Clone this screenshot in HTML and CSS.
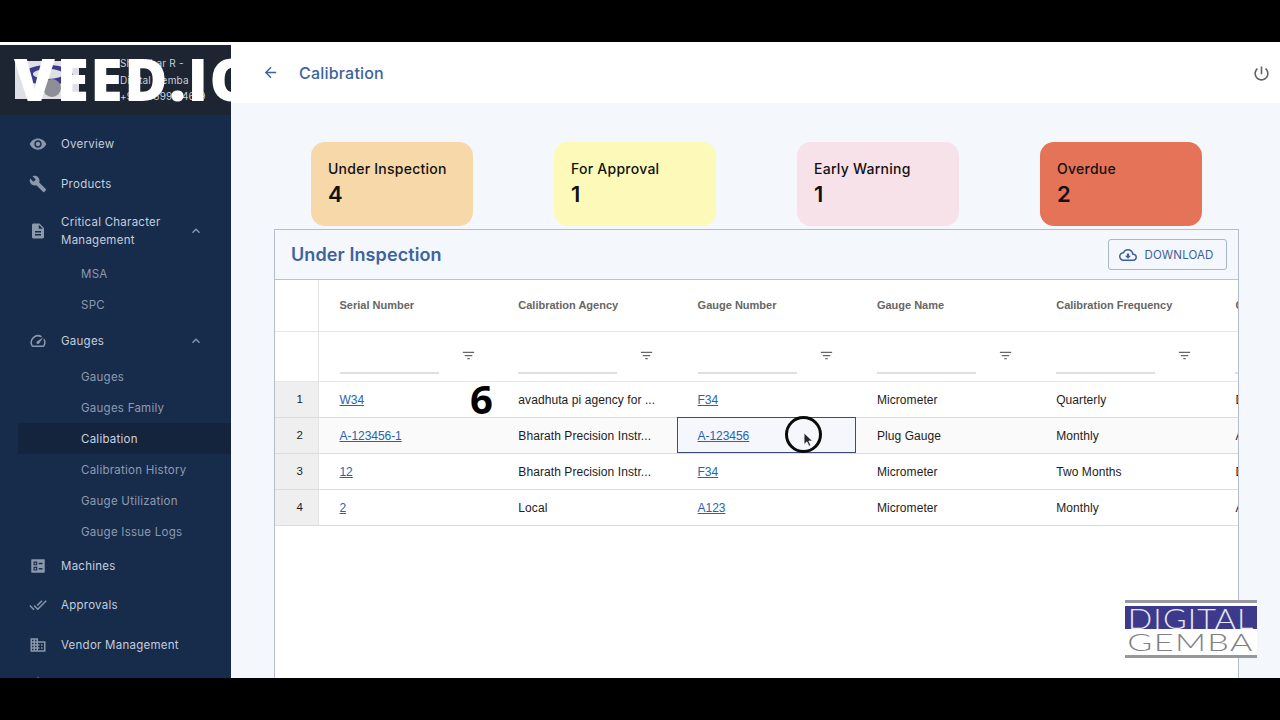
FILE: index.html
```html
<!DOCTYPE html>
<html lang="en">
<head>
    <meta charset="UTF-8">
    <meta name="viewport" content="width=device-width, initial-scale=1.0">
    <title>Calibration</title>
    <link rel="stylesheet" href="styles.css">
</head>
<body>
    <div class="bar-top"></div>

    <div class="app">
        <aside class="sidebar">
            <div class="brand">
                <svg class="brand-logo" viewBox="0 0 64 38" width="64" height="38">
                    <rect width="64" height="38" fill="#dfe0e6"/>
                    <ellipse cx="33" cy="14" rx="25" ry="10" fill="#3d3a8c"/>
                    <ellipse cx="33" cy="13" rx="15" ry="5" fill="#dfe0e6"/>
                    <circle cx="37" cy="27" r="9" fill="#8d8f96"/>
                </svg>
                <div class="brand-text">
                    <div>Shankhar R -</div>
                    <div>Digital Gemba</div>
                    <div>+91 99899 94619</div>
                </div>
            </div>

            <nav class="nav">
                <a class="nav-item">
                    <svg class="nav-icon" viewBox="0 0 24 24"><path d="M12 4.5C7 4.5 2.73 7.61 1 12c1.73 4.39 6 7.5 11 7.5s9.27-3.11 11-7.5c-1.73-4.39-6-7.5-11-7.5zM12 17c-2.76 0-5-2.24-5-5s2.24-5 5-5 5 2.24 5 5-2.24 5-5 5zm0-8c-1.66 0-3 1.34-3 3s1.34 3 3 3 3-1.34 3-3-1.34-3-3-3z"/></svg>
                    <span>Overview</span>
                </a>
                <a class="nav-item">
                    <svg class="nav-icon" viewBox="0 0 24 24"><path d="M22.7 19l-9.1-9.1c.9-2.3.4-5-1.5-6.9-2-2-5-2.4-7.4-1.3L9 6 6 9 1.6 4.7C.4 7.1.9 10.1 2.9 12.1c1.9 1.9 4.6 2.4 6.9 1.5l9.1 9.1c.4.4 1 .4 1.4 0l2.3-2.3c.5-.4.5-1.1.1-1.4z"/></svg>
                    <span>Products</span>
                </a>
                <a class="nav-item nav-item-tall">
                    <svg class="nav-icon" viewBox="0 0 24 24"><path d="M14 2H6c-1.1 0-1.99.9-1.99 2L4 20c0 1.1.89 2 1.99 2H18c1.1 0 2-.9 2-2V8l-6-6zm2 16H8v-2h8v2zm0-4H8v-2h8v2zm-3-5V3.5L18.5 9H13z"/></svg>
                    <span>Critical Character<br>Management</span>
                    <svg class="nav-caret" viewBox="0 0 24 24"><path d="M12 8l-6 6 1.41 1.41L12 10.83l4.59 4.58L18 14z"/></svg>
                </a>
                <a class="nav-sub">MSA</a>
                <a class="nav-sub">SPC</a>
                <a class="nav-item nav-gauges">
                    <svg class="nav-icon" viewBox="0 0 24 24"><path d="M20.38 8.57l-1.23 1.85a8 8 0 0 1-.22 7.58H5.07A8 8 0 0 1 15.58 6.85l1.85-1.23A10 10 0 0 0 3.35 19a2 2 0 0 0 1.72 1h13.85a2 2 0 0 0 1.74-1 10 10 0 0 0-.27-10.44zm-9.79 6.84a2 2 0 0 0 2.83 0l5.66-8.49-8.49 5.66a2 2 0 0 0 0 2.83z"/></svg>
                    <span>Gauges</span>
                    <svg class="nav-caret" viewBox="0 0 24 24"><path d="M12 8l-6 6 1.41 1.41L12 10.83l4.59 4.58L18 14z"/></svg>
                </a>
                <a class="nav-sub">Gauges</a>
                <a class="nav-sub">Gauges Family</a>
                <a class="nav-sub active">Calibation</a>
                <a class="nav-sub">Calibration History</a>
                <a class="nav-sub">Gauge Utilization</a>
                <a class="nav-sub">Gauge Issue Logs</a>
                <a class="nav-item nav-machines">
                    <svg class="nav-icon" viewBox="0 0 24 24"><path fill-rule="evenodd" d="M4 3h16a1 1 0 0 1 1 1v16a1 1 0 0 1-1 1H4a1 1 0 0 1-1-1V4a1 1 0 0 1 1-1zM6 6v5h5V6zm1.500 1.500h2v2h-2zM6 13v5h5v-5zm1.500 1.500h2v2h-2zM13 7.500V9.500h5V7.500zM13 14.500v2h5v-2z"/></svg>
                    <span>Machines</span>
                </a>
                <a class="nav-item">
                    <svg class="nav-icon" viewBox="0 0 24 24"><path d="M18 7l-1.41-1.41-6.34 6.34 1.41 1.41L18 7zm4.24-1.41L11.66 16.17 7.48 12l-1.41 1.41L11.66 19l12-12-1.42-1.41zM.41 13.41L6 19l1.41-1.41L1.83 12 .41 13.41z"/></svg>
                    <span>Approvals</span>
                </a>
                <a class="nav-item">
                    <svg class="nav-icon" viewBox="0 0 24 24"><path d="M12 7V3H2v18h20V7H12zM6 19H4v-2h2v2zm0-4H4v-2h2v2zm0-4H4V9h2v2zm0-4H4V5h2v2zm4 12H8v-2h2v2zm0-4H8v-2h2v2zm0-4H8V9h2v2zm0-4H8V5h2v2zm10 12h-8v-2h2v-2h-2v-2h2v-2h-2V9h8v10zm-2-8h-2v2h2v-2zm0 4h-2v2h2v-2z"/></svg>
                    <span>Vendor Management</span>
                </a>
                <a class="nav-item">
                    <svg class="nav-icon" viewBox="0 0 24 24"><path d="M12 2l3 7h-6zM4 12h16v9H4z"/></svg>
                </a>
            </nav>
        </aside>

        <main class="main">
            <header class="topbar">
                <svg class="back-icon" viewBox="0 0 24 24"><path d="M20 11H7.830l5.590-5.590L12 4l-8 8 8 8 1.410-1.410L7.830 13H20v-2z"/></svg>
                <span class="page-title">Calibration</span>
                <svg class="power-icon" viewBox="0 0 24 24"><path d="M13 3h-2v10h2V3zm4.830 2.170l-1.420 1.420C17.990 7.860 19 9.810 19 12c0 3.870-3.130 7-7 7s-7-3.130-7-7c0-2.190 1.010-4.140 2.580-5.420L6.170 5.170C4.230 6.820 3 9.260 3 12c0 4.970 4.030 9 9 9s9-4.030 9-9c0-2.740-1.230-5.180-3.170-6.830z"/></svg>
            </header>

            <section class="cards">
                <div class="card card-orange"><div class="card-label">Under Inspection</div><div class="card-value">4</div></div>
                <div class="card card-yellow"><div class="card-label">For Approval</div><div class="card-value">1</div></div>
                <div class="card card-pink"><div class="card-label">Early Warning</div><div class="card-value">1</div></div>
                <div class="card card-red"><div class="card-label">Overdue</div><div class="card-value">2</div></div>
            </section>

            <section class="panel">
                <div class="panel-head">
                    <h2>Under Inspection</h2>
                    <button class="download">
                        <svg viewBox="0 0 24 24"><path d="M19.350 10.040C18.670 6.590 15.640 4 12 4 9.110 4 6.600 5.640 5.350 8.040 2.340 8.360 0 10.910 0 14c0 3.310 2.690 6 6 6h13c2.760 0 5-2.240 5-5 0-2.640-2.050-4.780-4.650-4.960zM19 18H6c-2.210 0-4-1.790-4-4 0-2.050 1.530-3.760 3.560-3.970l1.070-.11.500-.950C8.080 7.140 9.940 6 12 6c2.620 0 4.880 1.860 5.390 4.430l.300 1.500 1.530.110c1.560.100 2.780 1.410 2.780 2.960 0 1.650-1.350 3-3 3zm-5.550-8h-2.900v3H8l4 4 4-4h-2.550z"/></svg>
                        DOWNLOAD
                    </button>
                </div>

                <table class="grid">
                    <thead>
                        <tr class="head-row">
                            <th class="idx"></th>
                            <th>Serial Number</th>
                            <th>Calibration Agency</th>
                            <th>Gauge Number</th>
                            <th>Gauge Name</th>
                            <th>Calibration Frequency</th>
                            <th>Calibration Date</th>
                        </tr>
                        <tr class="filter-row">
                            <th class="idx"></th>
                            <th><div class="filter"><span class="filter-line"></span><svg viewBox="0 0 24 24"><path d="M10 18h4v-2h-4v2zM3 6v2h18V6H3zm3 7h12v-2H6v2z"/></svg></div></th>
                            <th><div class="filter"><span class="filter-line"></span><svg viewBox="0 0 24 24"><path d="M10 18h4v-2h-4v2zM3 6v2h18V6H3zm3 7h12v-2H6v2z"/></svg></div></th>
                            <th><div class="filter"><span class="filter-line"></span><svg viewBox="0 0 24 24"><path d="M10 18h4v-2h-4v2zM3 6v2h18V6H3zm3 7h12v-2H6v2z"/></svg></div></th>
                            <th><div class="filter"><span class="filter-line"></span><svg viewBox="0 0 24 24"><path d="M10 18h4v-2h-4v2zM3 6v2h18V6H3zm3 7h12v-2H6v2z"/></svg></div></th>
                            <th><div class="filter"><span class="filter-line"></span><svg viewBox="0 0 24 24"><path d="M10 18h4v-2h-4v2zM3 6v2h18V6H3zm3 7h12v-2H6v2z"/></svg></div></th>
                            <th><div class="filter"><span class="filter-line"></span></div></th>
                        </tr>
                    </thead>
                    <tbody>
                        <tr>
                            <td class="idx">1</td>
                            <td><a href="#">W34</a></td>
                            <td>avadhuta pi agency for ...</td>
                            <td><a href="#">F34</a></td>
                            <td>Micrometer</td>
                            <td>Quarterly</td>
                            <td>Dec</td>
                        </tr>
                        <tr class="row-alt">
                            <td class="idx">2</td>
                            <td><a href="#">A-123456-1</a></td>
                            <td>Bharath Precision Instr...</td>
                            <td class="selected"><a href="#">A-123456</a></td>
                            <td>Plug Gauge</td>
                            <td>Monthly</td>
                            <td>Apr</td>
                        </tr>
                        <tr>
                            <td class="idx">3</td>
                            <td><a href="#">12</a></td>
                            <td>Bharath Precision Instr...</td>
                            <td><a href="#">F34</a></td>
                            <td>Micrometer</td>
                            <td>Two Months</td>
                            <td>Dec</td>
                        </tr>
                        <tr>
                            <td class="idx">4</td>
                            <td><a href="#">2</a></td>
                            <td>Local</td>
                            <td><a href="#">A123</a></td>
                            <td>Micrometer</td>
                            <td>Monthly</td>
                            <td>Apr</td>
                        </tr>
                    </tbody>
                </table>
            </section>
        </main>
    </div>

    <div class="bar-bottom"></div>

    <!-- video overlays -->
    <div class="watermark">VEED.IO</div>
    <div class="step">6</div>
    <div class="pointer">
        <svg viewBox="0 0 12 18" width="11" height="16"><path d="M1 1v13l3.300-3 2.200 5 2-1-2.200-4.800H10.500z" fill="#23262e" stroke="#fff" stroke-width=".8"/></svg>
    </div>
    <div class="gemba">
        <div class="gemba-rule"></div>
        <div class="gemba-top"><span>DIGITAL</span></div>
        <div class="gemba-bottom"><span>GEMBA</span></div>
        <div class="gemba-rule"></div>
    </div>
</body>
</html>
```

FILE: styles.css
```css
* { box-sizing: border-box; }
html, body { height: 100%; }
body { margin: 0; background: #000; font-family: Inter, "Liberation Sans", sans-serif; overflow: hidden; position: relative; }
.bar-top { height: 42px; }
.bar-bottom { height: 42px; }

.app { height: 636px; display: flex; background: #fff; overflow: hidden; }

/* sidebar */
.sidebar { width: 231px; flex: none; margin-top: 3px; background: #172b4a; overflow: hidden; }
.brand { height: 70px; background: #1c2531; display: flex; align-items: center; padding: 0 0 0 15px; }
.brand-logo { flex: none; }
.brand-text { font-size: 10px; line-height: 16.5px; color: #c9cfd8; padding-left: 41px; white-space: nowrap; letter-spacing: .2px; }
.nav { padding-top: 9.500px; }
.nav-item { height: 39.500px; display: flex; align-items: center; padding-left: 29px; color: #c3cede; font-size: 11.500px; letter-spacing: .25px; line-height: 18px; }
.nav-item-tall { height: 55px; }
.nav-gauges { margin-top: 1px; }
.nav-machines { margin-top: -1px; }
.nav-icon { width: 18px; height: 18px; fill: #8c98ab; margin-right: 14px; flex: none; }
.nav-caret { width: 16px; height: 16px; fill: #8c98ab; margin-left: auto; margin-right: 27px; flex: none; }
.nav-sub { height: 31px; display: flex; align-items: center; margin-left: 18px; padding-left: 63px; color: #8d9bb1; font-size: 11.500px; letter-spacing: .25px; }
.nav-sub.active { background: #14243d; color: #c9d3e0; }

/* main area */
.main { flex: 1; min-width: 0; background: #f4f7fc; display: flex; flex-direction: column; }
.topbar { height: 61px; flex: none; background: #fff; display: flex; align-items: center; padding: 0 9px 0 31px; }
.back-icon { width: 17px; height: 17px; fill: #3a62a6; margin-right: 20px; }
.page-title { font-size: 16px; font-weight: 500; color: #3d639f; letter-spacing: .2px; }
.power-icon { width: 19px; height: 19px; fill: #5f6368; margin: 2px 0 0 auto; }

.cards { display: flex; gap: 81px; padding: 39px 0 0 80px; flex: none; }
.card { width: 162px; height: 84px; border-radius: 14px; padding: 18px 17px 0; color: #111; }
.card-label { font-size: 14px; font-weight: 500; line-height: 18px; letter-spacing: .25px; }
.card-value { font-size: 22px; font-weight: 600; line-height: 26px; margin-top: 3px; }
.card-orange { background: #f6d8a9; }
.card-yellow { background: #fdfab9; }
.card-pink { background: #f8e2ea; }
.card-red { background: #e57357; }

/* table panel */
.panel { margin: 3px 0 0 43px; width: 965px; flex: 1; background: #fff; border: 1px solid #b6bdca; border-bottom: 0; overflow: hidden; }
.panel-head { height: 50px; background: #f4f7fc; border-bottom: 1px solid #bcc3cf; display: flex; align-items: center; justify-content: space-between; padding: 0 11px 0 16px; }
.panel-head h2 { margin: 0; font-size: 18px; font-weight: 600; color: #3d639f; letter-spacing: .1px; }
.download { width: 119px; height: 31px; display: flex; align-items: center; justify-content: center; gap: 7px; background: transparent; border: 1px solid #a7b6ce; border-radius: 3px; color: #3d5f9f; font-family: Inter, sans-serif; font-size: 11.500px; letter-spacing: .15px; padding: 0 2px 0 0; }
.download svg { width: 18px; height: 18px; fill: #3d5f9f; }

.grid { border-collapse: collapse; table-layout: fixed; width: 1118.800px; font-family: "Liberation Sans", Arial, sans-serif; font-size: 12px; letter-spacing: .08px; color: #1c1c1c; }
.grid th, .grid td { padding: 0 0 0 21px; text-align: left; white-space: nowrap; overflow: hidden; }
.grid th.idx, .grid td.idx { width: 43px; padding: 0 0 0 7px; text-align: center; border-right: 1px solid #e4e4e4; }
.grid td.idx { background: #efefef; font-size: 11.500px; }
.head-row th { height: 51px; font-size: 11px; color: #666; font-weight: bold; letter-spacing: 0; border-bottom: 1px solid #e6e6e6; }
.filter-row th { height: 50px; border-bottom: 1px solid #e6e6e6; font-weight: normal; }
.filter { display: flex; align-items: flex-start; height: 41px; }
.filter-line { width: 99px; height: 2px; background: #dfdfdf; margin-top: 36px; }
.filter svg { width: 15px; height: 15px; fill: #666; margin: 12px 0 0 22px; }
.grid tbody td { height: 36px; padding-top: 2px; border-bottom: 1px solid #dcdcdc; }
.grid a { color: #2563b0; letter-spacing: -.05px; }
.row-alt td { background: #fafafa; }
.grid td.selected { background: #f5f7fc; outline: 1px solid #3e4a78; outline-offset: -1px; }

/* overlays from the video */
.watermark { position: absolute; left: 14px; top: 40px; width: 217px; height: 76px; overflow: hidden; color: #fff; font-family: "Open Sans", sans-serif; font-size: 59px; font-weight: 800; letter-spacing: 1.500px; line-height: 76px; white-space: nowrap; }
.step { position: absolute; left: 470px; top: 372px; font-family: "Open Sans", sans-serif; font-size: 40px; font-weight: 700; line-height: 54px; color: #000; }
.pointer { position: absolute; left: 785px; top: 416px; width: 37px; height: 37px; border: 3px solid #0a0a0a; border-radius: 50%; display: flex; padding: 13px 0 0 15px; }
.gemba { position: absolute; left: 1125px; top: 600px; width: 132px; height: 58px; background: #fff; display: flex; flex-direction: column; font-family: Lato, "Liberation Sans", sans-serif; font-weight: 300; }
.gemba-rule { height: 3px; background: #96989c; flex: none; }
.gemba-top { height: 23px; margin-top: 3px; background: #3d3a8c; color: #e8e8f4; font-size: 28px; line-height: 24px; text-align: center; overflow: hidden; white-space: nowrap; }
.gemba-top span { display: inline-block; letter-spacing: 1px; transform: scaleX(1.15); }
.gemba-bottom { flex: 1; color: #808286; font-size: 24px; line-height: 26px; text-align: center; overflow: hidden; white-space: nowrap; }
.gemba-bottom span { display: inline-block; letter-spacing: 1px; transform: scaleX(1.42); }
```
